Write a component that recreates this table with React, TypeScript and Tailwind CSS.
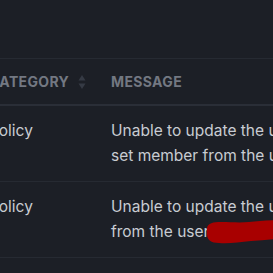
export default function App() {
  const rows = [
    { category: "Policy", lines: ["Unable to update the user's permission", "set member from the user group"], redact: false },
    { category: "Policy", lines: ["Unable to update the user's permission", "from the user"], redact: true },
  ];

  return (
    <div className="w-screen h-screen overflow-hidden bg-[#1c1f26] font-['Inter',sans-serif]">
      <div className="pt-[58px] -ml-[11px] w-[600px]">
        <div className="flex items-center h-[48px] border-t border-[#262a32] border-b-2 border-b-[#2a2e37] text-[14px] font-bold tracking-wide text-[#737882]">
          <div className="w-[122px] shrink-0 flex items-center gap-[9px]">
            CATEGORY
            <svg width="8" height="16" viewBox="0 0 8 16" className="text-[#353a44]">
              <path d="M4 1 L7.5 6.5 H0.5 Z" fill="currentColor" />
              <path d="M4 15 L7.5 9.5 H0.5 Z" fill="currentColor" />
            </svg>
          </div>
          <div>MESSAGE</div>
        </div>
        {rows.map((row, i) => (
          <div key={i} className="flex pt-3 pb-[13px] border-b border-[#262a32] text-[15.5px] leading-[25px] text-[#c8ccd2]">
            <div className="w-[122px] shrink-0">{row.category}</div>
            <div className="whitespace-nowrap">
              <div>{row.lines[0]}</div>
              <div className="flex items-center">
                {row.lines[1]}
                {row.redact && (
                  <svg width="80" height="24" viewBox="0 0 80 24" className="shrink-0 -ml-[2px]">
                    <path
                      d="M0 8 C1 3 6 2 14 2 C24 2 32 3 42 2 C52 1 62 0 80 0 L80 18 C68 19 56 20 44 21 C32 22 22 24 12 23 C4 23 0 20 0 14 Z"
                      fill="#a80000"
                    />
                  </svg>
                )}
              </div>
            </div>
          </div>
        ))}
      </div>
    </div>
  );
}
